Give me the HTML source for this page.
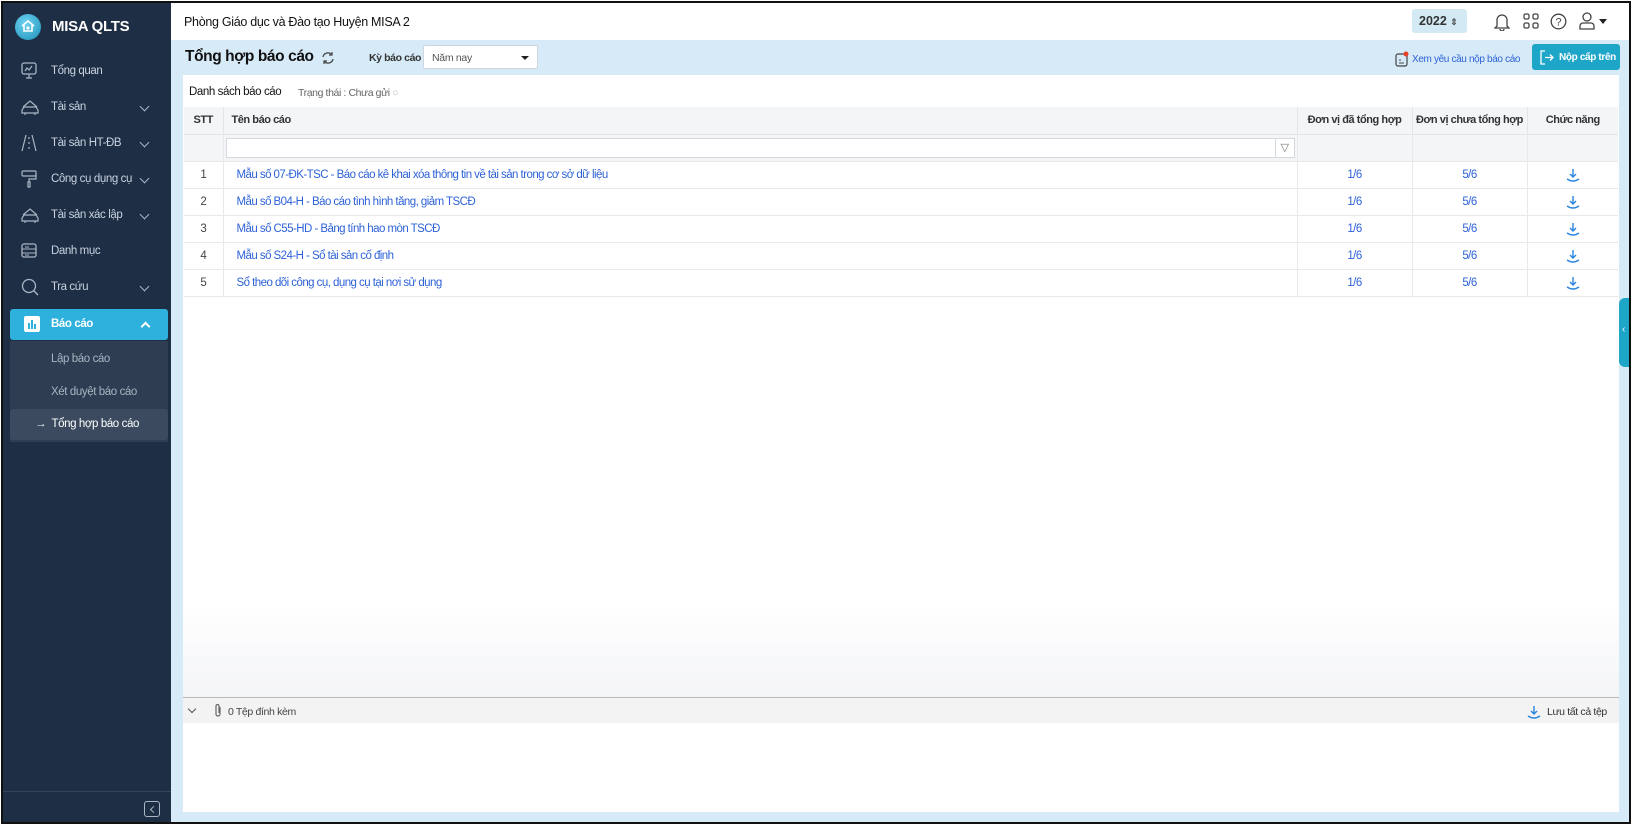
<!DOCTYPE html>
<html><head><meta charset="utf-8"><style>
*{box-sizing:border-box;margin:0;padding:0}
body{width:1635px;height:828px;background:#fff;font-family:"Liberation Sans",sans-serif;font-size:12px;color:#222;position:relative;overflow:hidden}
.frame{position:absolute;left:1px;top:1px;width:1630px;height:823px;border:2px solid #111;overflow:hidden;background:#d6eaf8}
.abs{position:absolute;white-space:nowrap}
.side{left:0;top:0;width:168px;height:820px;background:#1e2e45}
.side .it{position:absolute;left:0;width:168px;height:30px;color:#c9d3df;font-size:11.5px;letter-spacing:-.4px}
.side .it span{position:absolute;left:48px;top:8px}
.side .it svg{position:absolute;left:18px;top:5px}
.side .chev{position:absolute;left:138px;top:10px;width:7px;height:7px;border-right:1.5px solid #aab6c4;border-bottom:1.5px solid #aab6c4;transform:rotate(45deg)}
.top{left:168px;top:0;width:1460px;height:37px;background:#fff}
.card{left:180px;top:72px;width:1436px;height:737px;background:#fff}
td,th{font-size:11.5px;letter-spacing:-.55px;white-space:nowrap}
table{border-collapse:collapse;position:absolute;left:181px;top:104px;width:1434px;table-layout:fixed}
th{height:27px;background:#f4f5f7;font-weight:bold;color:#333;border-right:1px solid #e3e5e8;border-bottom:1px solid #e3e5e8;text-align:center;font-size:11px;letter-spacing:-.45px}
td{height:27px;border-right:1px solid #e8e9ec;border-bottom:1px solid #e8e9ec;text-align:center;color:#2e62d8}
td.n{color:#444}
td.l{text-align:left;padding-left:13px}
tr.f td{background:#f4f5f7;height:27px}
.dl{display:inline-block;vertical-align:middle}
</style></head><body>
<div class="frame">
 <div class="abs side">
  <div class="abs" style="left:12px;top:11px;width:26px;height:26px;border-radius:50%;background:radial-gradient(circle at 40% 35%,#6fd3f0,#1b8fb8)"></div>
  <svg class="abs" style="left:17px;top:15px" width="16" height="16" viewBox="0 0 16 16"><path d="M2 8 L8 3 L14 8 M4 7 V13 H12 V7" fill="none" stroke="#fff" stroke-width="1.6"/><circle cx="8" cy="10" r="1.6" fill="#fff"/></svg>
  <div class="abs" style="left:49px;top:15px;color:#fff;font-weight:bold;font-size:15px;letter-spacing:-.3px">MISA QLTS</div>
  <div class="it" style="top:54px"><svg width="16" height="18" viewBox="0 0 16 18"><rect x="1" y="1" width="14" height="11" rx="2" fill="none" stroke="#aab6c4" stroke-width="1.3"/><path d="M4 9 L6 6 L8 8 L11 4 M8 12 V16 M5 16 H11" fill="none" stroke="#aab6c4" stroke-width="1.2"/></svg><span>Tổng quan</span></div>
  <div class="it" style="top:90px"><svg width="18" height="18" viewBox="0 0 18 18"><path d="M2 9 L9 3 L16 9 M1 12 L3 9 H15 L17 12 V15 H1 Z M4 15 V17 M14 15 V17" fill="none" stroke="#aab6c4" stroke-width="1.2"/></svg><span>Tài sản</span><i class="chev"></i></div>
  <div class="it" style="top:126px"><svg width="16" height="18" viewBox="0 0 16 18"><path d="M5 1 L1 17 M11 1 L15 17 M8 3 V5 M8 8 V10 M8 13 V15" fill="none" stroke="#aab6c4" stroke-width="1.2"/></svg><span>Tài sản HT-ĐB</span><i class="chev"></i></div>
  <div class="it" style="top:162px"><svg width="16" height="18" viewBox="0 0 16 18"><rect x="1" y="1" width="14" height="5" rx="1" fill="none" stroke="#aab6c4" stroke-width="1.2"/><path d="M15 4 V9 H8 V12 M7 12 H9 V17 H7 Z" fill="none" stroke="#aab6c4" stroke-width="1.2"/></svg><span>Công cụ dụng cụ</span><i class="chev"></i></div>
  <div class="it" style="top:198px"><svg width="18" height="18" viewBox="0 0 18 18"><path d="M2 9 L9 3 L16 9 M1 12 L3 9 H15 L17 12 V15 H1 Z M4 15 V17 M14 15 V17" fill="none" stroke="#aab6c4" stroke-width="1.2"/></svg><span>Tài sản xác lập</span><i class="chev"></i></div>
  <div class="it" style="top:234px"><svg width="16" height="18" viewBox="0 0 16 18"><rect x="1" y="2" width="14" height="13" rx="2" fill="none" stroke="#aab6c4" stroke-width="1.3"/><path d="M1 7 H15 M1 11 H15 M4 5 H8 M4 13 H8" stroke="#aab6c4" stroke-width="1.1"/></svg><span>Danh mục</span></div>
  <div class="it" style="top:270px"><svg width="18" height="18" viewBox="0 0 18 18"><circle cx="8" cy="8" r="6.5" fill="none" stroke="#aab6c4" stroke-width="1.3"/><path d="M13 13 L17 17" stroke="#aab6c4" stroke-width="1.4"/></svg><span>Tra cứu</span><i class="chev"></i></div>
  <div class="abs" style="left:7px;top:306px;width:158px;height:31px;background:#2eb2dd;border-radius:3px"></div>
  <div class="abs" style="left:21px;top:313px;width:16px;height:16px;background:#fff;border-radius:2px"></div>
  <div class="abs" style="left:25px;top:320px;width:2px;height:6px;background:#2eb2dd"></div>
  <div class="abs" style="left:28px;top:317px;width:2px;height:9px;background:#2eb2dd"></div>
  <div class="abs" style="left:31px;top:321px;width:2px;height:5px;background:#2eb2dd"></div>
  <div class="abs" style="left:48px;top:315px;color:#fff;font-weight:bold;font-size:11.5px;letter-spacing:-.4px">Báo cáo</div>
  <div class="abs" style="left:139px;top:320px;width:7px;height:7px;border-left:2px solid #fff;border-top:2px solid #fff;transform:rotate(45deg)"></div>
  <div class="abs" style="left:7px;top:338px;width:158px;height:101px;background:#2e3d52"></div>
  <div class="abs" style="left:48px;top:350px;color:#a9b4c1;font-size:11.5px;letter-spacing:-.4px">Lập báo cáo</div>
  <div class="abs" style="left:48px;top:383px;color:#a9b4c1;font-size:11.5px;letter-spacing:-.4px">Xét duyệt báo cáo</div>
  <div class="abs" style="left:7px;top:406px;width:158px;height:31px;background:#3b4a5e;border-radius:3px"></div>
  <div class="abs" style="left:32px;top:415px;color:#fff;font-size:11.5px;letter-spacing:-.4px">→&nbsp; Tổng hợp báo cáo</div>
  <div class="abs" style="left:0;top:788px;width:168px;height:1px;background:#34445a"></div>
  <div class="abs" style="left:141px;top:798px;width:16px;height:16px;border:1.3px solid #aab6c4;border-radius:3px"></div>
  <div class="abs" style="left:148px;top:804px;width:5px;height:5px;border-left:1.3px solid #aab6c4;border-bottom:1.3px solid #aab6c4;transform:rotate(45deg)"></div>
 </div>
 <div class="abs top">
  <div class="abs" style="left:13px;top:12px;font-size:12.5px;color:#111;letter-spacing:-.3px">Phòng Giáo dục và Đào tạo Huyện MISA 2</div>
  <div class="abs" style="left:1241px;top:6px;width:55px;height:24px;background:#d3eaf5;border-radius:3px;font-weight:bold;font-size:12.5px;padding:5px 0 0 7px;color:#333">2022 <span style="font-size:9px;color:#555">⇕</span></div>
  <svg class="abs" style="left:1323px;top:9px" width="16" height="19" viewBox="0 0 16 19"><path d="M3 14 V8 A5 5 0 0 1 13 8 V14 L15 16 H1 Z M6 17 A2 2 0 0 0 10 17" fill="none" stroke="#444" stroke-width="1.3"/></svg>
  <svg class="abs" style="left:1352px;top:10px" width="16" height="16" viewBox="0 0 16 16"><g fill="none" stroke="#444" stroke-width="1.3"><rect x="1" y="1" width="5" height="5" rx="1.5"/><rect x="10" y="1" width="5" height="5" rx="1.5"/><rect x="1" y="10" width="5" height="5" rx="1.5"/><rect x="10" y="10" width="5" height="5" rx="1.5"/></g></svg>
  <svg class="abs" style="left:1379px;top:10px" width="17" height="17" viewBox="0 0 17 17"><circle cx="8.5" cy="8.5" r="7.3" fill="none" stroke="#444" stroke-width="1.3"/><text x="8.5" y="12.5" font-size="11" text-anchor="middle" fill="#444" font-family="Liberation Sans">?</text></svg>
  <svg class="abs" style="left:1408px;top:9px" width="16" height="18" viewBox="0 0 16 18"><circle cx="8" cy="5" r="4" fill="none" stroke="#444" stroke-width="1.3"/><path d="M1 17 V14 A3 3 0 0 1 4 11 H12 A3 3 0 0 1 15 14 V17 Z" fill="none" stroke="#444" stroke-width="1.3"/></svg>
  <div class="abs" style="left:1428px;top:16px;border-left:4px solid transparent;border-right:4px solid transparent;border-top:5px solid #222"></div>
 </div>
 <div class="abs" style="left:182px;top:45px;font-size:15.5px;font-weight:bold;color:#111;letter-spacing:-.4px">Tổng hợp báo cáo</div>
 <svg class="abs" style="left:318px;top:48px" width="14" height="14" viewBox="0 0 14 14"><path d="M2 6 A5 5 0 0 1 11 4 M12 8 A5 5 0 0 1 3 10" fill="none" stroke="#444" stroke-width="1.3"/><path d="M11 1 V4 H8 M3 13 V10 H6" fill="none" stroke="#444" stroke-width="1.2"/></svg>
 <div class="abs" style="left:366px;top:49px;font-size:10.5px;font-weight:bold;color:#333;letter-spacing:-.4px">Kỳ báo cáo</div>
 <div class="abs" style="left:420px;top:42px;width:115px;height:24px;background:#fff;border:1px solid #cfd6dd;border-radius:2px;font-size:10.5px;color:#555;padding:6px 0 0 8px;letter-spacing:-.3px">Năm nay</div>
 <div class="abs" style="left:518px;top:53px;border-left:4px solid transparent;border-right:4px solid transparent;border-top:4px solid #222"></div>
 <svg class="abs" style="left:1392px;top:48px" width="14" height="16" viewBox="0 0 14 16"><rect x="1" y="3" width="11" height="12" rx="2" fill="none" stroke="#444" stroke-width="1.2"/><path d="M4 9 H6 M4 12 H9" stroke="#444" stroke-width="1.1"/><circle cx="11" cy="3" r="2.5" fill="#e8412b"/></svg>
 <div class="abs" style="left:1409px;top:51px;font-size:10px;color:#2e62d8;letter-spacing:-.35px">Xem yêu cầu nộp báo cáo</div>
 <div class="abs" style="left:1529px;top:41px;width:88px;height:26px;background:#1ea6c8;border-radius:3px"></div>
 <svg class="abs" style="left:1536px;top:47px" width="15" height="15" viewBox="0 0 15 15"><path d="M6 1 H2 V14 H6 M6 7.5 H14 M11 4.5 L14 7.5 L11 10.5" fill="none" stroke="#fff" stroke-width="1.3"/></svg>
 <div class="abs" style="left:1556px;top:49px;font-size:10px;font-weight:bold;color:#fff;letter-spacing:-.35px">Nộp cấp trên</div>
 <div class="abs card"></div>
 <div class="abs" style="left:186px;top:83px;font-size:11.5px;color:#111;letter-spacing:-.4px">Danh sách báo cáo</div>
 <div class="abs" style="left:295px;top:84px;font-size:10.5px;color:#666;letter-spacing:-.4px">Trạng thái : Chưa gửi <span style="color:#bbb">○</span></div>
 <table>
  <tr><th style="width:39px">STT</th><th style="text-align:left;padding-left:8px">Tên báo cáo</th><th style="width:115px">Đơn vị đã tổng hợp</th><th style="width:115px">Đơn vị chưa tổng hợp</th><th style="width:91px;border-right:none">Chức năng</th></tr>
  <tr class="f"><td></td><td style="padding:3px 2px"><div style="height:20px;background:#fff;border:1px solid #d5d9de;position:relative"><div style="position:absolute;right:0;top:0;width:19px;height:18px;border-left:1px solid #d5d9de;color:#777;font-size:11px;line-height:18px">▽</div></div></td><td></td><td></td><td style="border-right:none"></td></tr>
  <tr><td class="n">1</td><td class="l">Mẫu số 07-ĐK-TSC - Báo cáo kê khai xóa thông tin về tài sản trong cơ sở dữ liệu</td><td>1/6</td><td>5/6</td><td style="border-right:none"><svg class="dl" width="14" height="14" viewBox="0 0 14 14"><path d="M7 1 V9 M4 6 L7 9 L10 6 M1 11 Q7 15 13 11" fill="none" stroke="#2a86e0" stroke-width="1.4"/></svg></td></tr>
  <tr><td class="n">2</td><td class="l">Mẫu số B04-H - Báo cáo tình hình tăng, giảm TSCĐ</td><td>1/6</td><td>5/6</td><td style="border-right:none"><svg class="dl" width="14" height="14" viewBox="0 0 14 14"><path d="M7 1 V9 M4 6 L7 9 L10 6 M1 11 Q7 15 13 11" fill="none" stroke="#2a86e0" stroke-width="1.4"/></svg></td></tr>
  <tr><td class="n">3</td><td class="l">Mẫu số C55-HD - Bảng tính hao mòn TSCĐ</td><td>1/6</td><td>5/6</td><td style="border-right:none"><svg class="dl" width="14" height="14" viewBox="0 0 14 14"><path d="M7 1 V9 M4 6 L7 9 L10 6 M1 11 Q7 15 13 11" fill="none" stroke="#2a86e0" stroke-width="1.4"/></svg></td></tr>
  <tr><td class="n">4</td><td class="l">Mẫu số S24-H - Sổ tài sản cố định</td><td>1/6</td><td>5/6</td><td style="border-right:none"><svg class="dl" width="14" height="14" viewBox="0 0 14 14"><path d="M7 1 V9 M4 6 L7 9 L10 6 M1 11 Q7 15 13 11" fill="none" stroke="#2a86e0" stroke-width="1.4"/></svg></td></tr>
  <tr><td class="n">5</td><td class="l">Sổ theo dõi công cụ, dụng cụ tại nơi sử dụng</td><td>1/6</td><td>5/6</td><td style="border-right:none"><svg class="dl" width="14" height="14" viewBox="0 0 14 14"><path d="M7 1 V9 M4 6 L7 9 L10 6 M1 11 Q7 15 13 11" fill="none" stroke="#2a86e0" stroke-width="1.4"/></svg></td></tr>
 </table>
 <div class="abs" style="left:180px;top:600px;width:1436px;height:94px;background:linear-gradient(#fff,#f4f5f8)"></div>
 <div class="abs" style="left:180px;top:694px;width:1436px;height:26px;background:#f3f3f3;border-top:1px solid #b9b9b9"></div>
 <div class="abs" style="left:186px;top:703px;width:6px;height:6px;border-right:1.4px solid #555;border-bottom:1.4px solid #555;transform:rotate(45deg)"></div>
 <svg class="abs" style="left:210px;top:700px" width="10" height="15" viewBox="0 0 10 15"><path d="M7 4 V11 A2 2 0 0 1 3 11 V3 A1.5 1.5 0 0 1 6 3 V10" fill="none" stroke="#666" stroke-width="1.2"/></svg>
 <div class="abs" style="left:225px;top:703px;font-size:10.5px;color:#444;letter-spacing:-.35px">0 Tệp đính kèm</div>
 <svg class="abs" style="left:1524px;top:702px" width="14" height="14" viewBox="0 0 14 14"><path d="M7 1 V9 M4 6 L7 9 L10 6 M1 11 Q7 15 13 11" fill="none" stroke="#2a86e0" stroke-width="1.4"/></svg>
 <div class="abs" style="left:1544px;top:703px;font-size:10.5px;color:#333;letter-spacing:-.35px">Lưu tất cả tệp</div>
 <div class="abs" style="left:1616px;top:295px;width:14px;height:69px;background:#1ea6c8;border-radius:6px 0 0 6px;color:#fff;font-size:10px;padding:26px 0 0 3px">‹</div>
</div>
</body></html>
